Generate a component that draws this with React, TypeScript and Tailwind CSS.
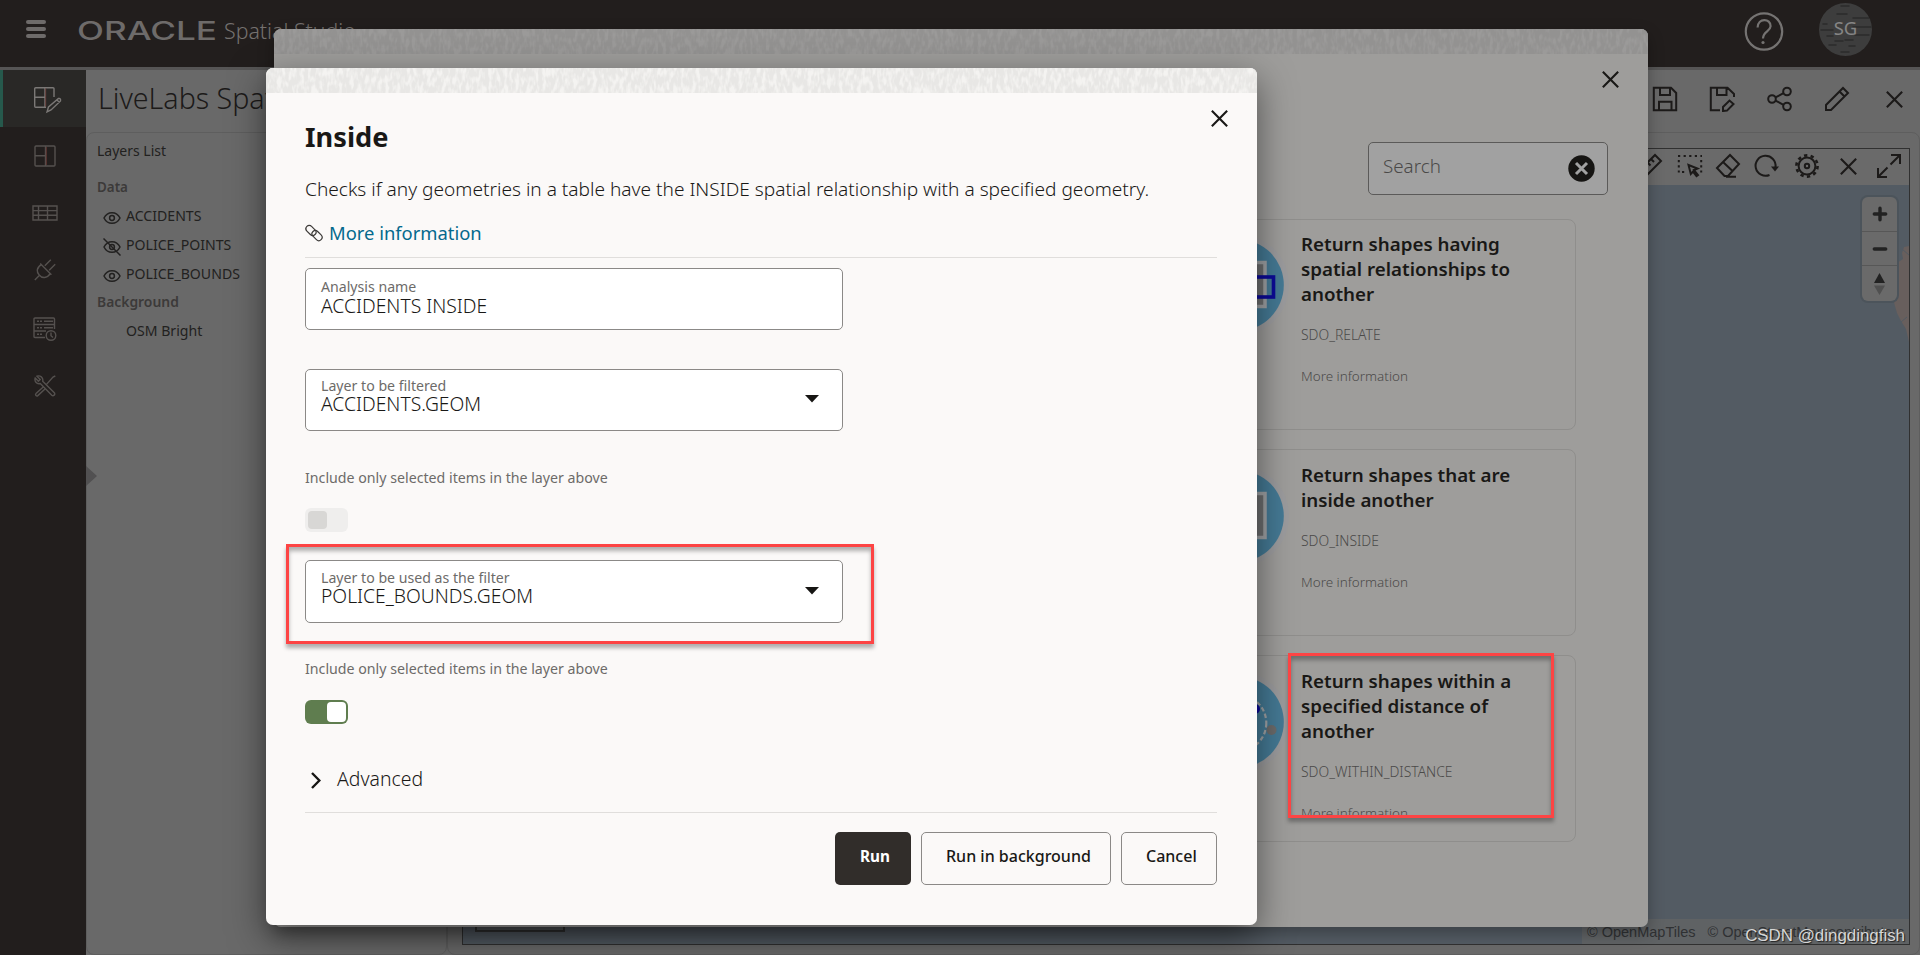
import React from "react";
import type { ReactNode } from "react";

type IconProps = { children: ReactNode; size?: string; box?: string; stroke?: number };

function Icon({ children, size = "size-6", box = "0 0 24 24", stroke = 2 }: IconProps) {
  return (
    <svg viewBox={box} className={`${size} shrink-0`} fill="none" stroke="currentColor" strokeWidth={stroke}>
      {children}
    </svg>
  );
}

function Cross({ size = "size-4" }: { size?: string }) {
  return (
    <Icon size={size} box="0 0 16 16" stroke={2}>
      <path d="M0.8 0.8 L15.2 15.2 M15.2 0.8 L0.8 15.2" />
    </Icon>
  );
}

function TextureStrip({ id, base, ink, seed }: { id: string; base: string; ink: string; seed: number }) {
  return (
    <svg className="block h-[25px] w-full shrink-0" aria-hidden="true">
      <filter id={id} x="0" y="0" width="100%" height="100%" colorInterpolationFilters="sRGB">
        <feTurbulence type="fractalNoise" baseFrequency="0.26 0.11" numOctaves="2" seed={seed} />
        <feColorMatrix values="0 0 0 0 0  0 0 0 0 0  0 0 0 0 0  4 0 0 0 -1.3" result="mask" />
        <feFlood floodColor={ink} />
        <feComposite in2="mask" operator="in" />
      </filter>
      <rect width="100%" height="100%" fill={base} />
      <rect width="100%" height="100%" filter={`url(#${id})`} />
    </svg>
  );
}

function Eye({ off = false }: { off?: boolean }) {
  return (
    <Icon size="w-[18px] h-[18px]" box="0 0 18 18" stroke={1.5}>
      <path d="M1 9 C4.5 1.9 13.5 1.9 17 9 C13.5 16.1 4.5 16.1 1 9 Z" />
      <circle cx="9" cy="9" r="2.4" />
      {off && <path d="M0.5 0.5 L17.5 17.5" />}
    </Icon>
  );
}

function LayerRow({ name, icon }: { name: string; icon?: ReactNode }) {
  return (
    <div className="flex h-[29px] items-center text-[14.1px] text-[#222120]">
      <span className="mr-[5px] flex w-[24px] justify-end pt-1">{icon}</span>
      <span className="whitespace-nowrap">{name}</span>
    </div>
  );
}

function Sidebar() {
  const item = "flex h-[57.4px] items-center justify-center pl-[3px]";
  return (
    <nav className="flex w-[86px] shrink-0 flex-col bg-[#221e1d] text-[#55514f]">
      <div className="flex h-[57px] items-center justify-center border-l-[3px] border-[#26594c] bg-[#292826] pt-[3px] pl-[6px] text-[#7b7876]">
        <Icon size="w-[30px] h-[28px]" box="0 0 30 28" stroke={1.4}>
          <path d="M21 11 V2.7 Q21 1.7 20 1.7 H2.7 Q1.7 1.7 1.7 2.7 V20.3 Q1.7 21.3 2.7 21.3 H13 M12 1.7 V21.3 M1.7 11.3 H12" />
          <path d="M14 26 L15.5 21 L25.5 12.5 Q28 12 27.5 15 L18 24 Z M24 14 L26.5 16.5" />
          <path d="M12.7 2.4 V20.6" stroke="#6b3a35" strokeWidth="0.8" />
        </Icon>
      </div>
      <div className={item}>
        <Icon size="w-[22px] h-[22px]" box="0 0 22 22" stroke={1.4}>
          <rect x="1" y="1" width="20" height="20" rx="1" />
          <path d="M11.5 1 V21 M1 10.7 H11.5" />
          <path d="M12.3 2 V20" stroke="#6b3a35" strokeWidth="0.8" />
        </Icon>
      </div>
      <div className={item}>
        <Icon size="w-[26px] h-[16px]" box="0 0 26 16" stroke={1.4}>
          <path d="M1 1 H25 V15 H1 Z M1 5.6 H25 M1 10.3 H25 M6.5 1 V15 M15.5 1 V15" />
        </Icon>
      </div>
      <div className={item}>
        <Icon size="w-[22px] h-[22px]" box="0 0 22 22" stroke={1.4}>
          <path d="M0.8 21 L6 15.8 M6.2 4.6 L17.4 15.8 M7.3 5.7 C2 9 2.6 13 5.2 16 C8 19.5 13 19.5 16.3 14.7 M10.8 6.8 L16.8 0.8 M15.2 11.2 L21.2 5.2" />
        </Icon>
      </div>
      <div className={`pt-[2px] ${item}`}>
        <Icon size="w-[24px] h-[24px]" box="0 0 24 24" stroke={1.4}>
          <path d="M12 20.5 H2 Q1 20.5 1 19.5 V2 Q1 1 2 1 H20.5 Q21.5 1 21.5 2 V12 M1 7.5 H21.5 M1 14 H13 M4 4.2 H6 M7 4.2 H9 M11 4.2 H20 M4 10.7 H6 M7 10.7 H9 M11 10.7 H20 M4 17.2 H6 M7 17.2 H9" />
          <circle cx="18" cy="18.5" r="4.8" />
          <path d="M18 15.5 V18.7 L20 20.5" />
        </Icon>
      </div>
      <div className={`pt-[2px] ${item}`}>
        <Icon size="w-[22px] h-[22px]" box="0 0 22 22" stroke={1.4}>
          <path d="M3 1.2 L6.2 4.4 L4.4 6.2 L1.2 3 C0.2 6 2.5 9.5 6.3 8.5 L17.8 20.2 C19.3 21.6 21.8 19.4 20.3 17.8 L8.7 6.3 C9.6 2.5 6 0 3 1.2 Z" />
          <path d="M21.3 1 L19 2 L12.3 9.6 M9.5 11.8 L2 18.6 C0.8 20 2.6 21.6 3.8 20.6 L11.3 13.8" />
        </Icon>
      </div>
    </nav>
  );
}

function Header() {
  return (
    <header className="flex h-[67px] shrink-0 items-start bg-[#221e1d]">
      <div className="mt-5 ml-[26px] flex w-5 flex-col gap-[3px]">
        <span className="h-[4px] rounded-sm bg-[#6e6b6a]" />
        <span className="h-[4px] rounded-sm bg-[#6e6b6a]" />
        <span className="h-[4px] rounded-sm bg-[#6e6b6a]" />
      </div>
      <svg className="mt-[15px] ml-[31px] h-[30px] w-[140px] shrink-0" viewBox="0 0 140 30">
        <text x="0" y="24.6" textLength="140" lengthAdjust="spacingAndGlyphs" fill="#6e6b6a" className="font-['Inter'] text-[25px] font-medium">
          ORACLE
        </text>
      </svg>
      <span className="mt-[15px] ml-[7px] text-[21.3px] leading-8 font-light whitespace-nowrap text-[#75716f]">Spatial Studio</span>
      <div className="grow" />
      <svg className="mt-[12px] h-[40px] w-[40px]" viewBox="0 0 40 40" fill="none" stroke="#757372" strokeWidth="2.2">
        <circle cx="20" cy="19.5" r="18.2" />
        <path d="M13.6 15.5 C13.6 5.5 27 6 26.6 14.3 C26.3 19.6 19 19.5 19 26.5" />
        <circle cx="19" cy="30.5" r="1.6" fill="#757372" stroke="none" />
      </svg>
      <div className="mt-[3px] mr-[48px] ml-[35px] grid size-[53px] place-items-center overflow-hidden rounded-full bg-[#3d3d3d]">
        <svg className="col-start-1 row-start-1 size-[53px]" viewBox="0 0 53 53" stroke="#2b2b2b" strokeWidth="1.5" strokeLinecap="round">
          <path d="M22 3 H30 M18 11 H28 M34 15 H50 M4 21 H8 M34 24 H52 M2 27 H14 M8 33 H14 M36 32 H50 M16 38 H24 M26 37 H34 M10 42 H17 M30 43 H36 M22 49 H30" />
        </svg>
        <span className="col-start-1 row-start-1 pb-1 text-[18.5px] leading-6 text-[#858585]">SG</span>
      </div>
    </header>
  );
}

function StudioToolbar() {
  return (
    <div className="flex h-[62px] items-center text-[#1c1a19]">
      <h1 className="ml-[12px] pb-[6px] text-[28.6px] font-[350] whitespace-nowrap">LiveLabs Spatial</h1>
      <div className="grow" />
      <div className="flex items-center pr-[17px] pb-[4px]">
        <Icon size="w-[26px] h-[26px]" box="0 0 26 26">
          <path d="M1.8 1.8 H19 L24.2 7 V24.2 H1.8 Z M8 1.8 V9 H18 V1.8 M7 24 V15.8 H19.5 V24" />
        </Icon>
        <span className="w-[31px]" />
        <Icon size="w-[26px] h-[26px]" box="0 0 26 26">
          <path d="M11 24.2 H1.8 V1.8 H18.5 L25 8 V11 M8 1.8 V9 H17.5 V1.8 M14 25 V21 L20.5 14.5 L24.5 18 L18 24.6 Z" />
        </Icon>
        <span className="w-[32px]" />
        <Icon size="w-[26px] h-[26px]" box="0 0 26 26">
          <circle cx="5" cy="13" r="3.8" />
          <circle cx="20" cy="5.5" r="3.8" />
          <circle cx="20" cy="20.5" r="3.8" />
          <path d="M8.5 11.4 L16.5 7.2 M8.5 14.6 L16.5 18.8" />
        </Icon>
        <span className="w-[31px]" />
        <Icon size="w-[26px] h-[26px]" box="0 0 26 26">
          <path d="M2 24 V19 L19 2 L24 7 L7 24 Z M15.5 5.5 L20.5 10.5" />
        </Icon>
        <span className="w-[36px]" />
        <Cross size="size-[17px]" />
      </div>
    </div>
  );
}

function MapPanel() {
  return (
    <section className="flex grow rounded-tr-lg rounded-b-lg border border-[#5e5e5e] pt-[15px] pr-[9px] pb-[9px] pl-[14px]">
      <div className="relative flex grow flex-col border border-[#303030] bg-[#535b63]">
        <div className="flex h-[36px] shrink-0 items-center justify-end bg-[#6a6a6a] pr-[7px] pb-[2px] text-[#1c1a19]">
          <Icon size="w-[26px] h-[26px]" box="0 0 26 26">
            <path d="M2 18 L18 2 L24 8 L8 24 Z M14 6 L17 9 M10.5 9.5 L13.5 12.5 M7 13 L10 16" />
          </Icon>
          <span className="w-[14px]" />
          <Icon size="w-[26px] h-[26px]" box="0 0 26 26">
            <path d="M1 3 H25" strokeDasharray="2.2 3.4" />
            <path d="M1.8 7 V20 M24.2 7 V20 M5 19 H10" strokeDasharray="2.2 3" />
            <path d="M11.5 12 L20.5 15.5 L17 17 L21 22 L19.5 23.2 L16 18.6 L13.8 21 Z" />
          </Icon>
          <span className="w-[12px]" />
          <Icon size="w-[26px] h-[26px]" box="0 0 26 26">
            <path d="M2 15 L15 2 L24 11 L13 23 H9.5 Z M8 9 L17.5 18 M11 23.8 H21" />
          </Icon>
          <span className="w-[12px]" />
          <Icon size="w-[26px] h-[26px]" box="0 0 26 26">
            <path d="M16.5 22 A10 10 0 1 1 22.5 14" />
            <path d="M18 13.5 H26 L22 18.5 Z" fill="currentColor" stroke="none" />
          </Icon>
          <span className="w-[15px]" />
          <Icon size="w-[26px] h-[26px]" box="0 0 26 26">
            <circle cx="13" cy="13" r="8.4" />
            <circle cx="13" cy="13" r="2.2" />
            <circle cx="13" cy="13" r="10.6" strokeWidth="2.6" strokeDasharray="3.33 3.33" />
          </Icon>
          <span className="w-[20px]" />
          <Cross size="size-[17px]" />
          <span className="w-[19px]" />
          <Icon size="w-[26px] h-[26px]" box="0 0 26 26">
            <path d="M15 2 H24 V11 M24 2 L14.5 11.5 M2 15 V24 H11 M2 24 L11.5 14.5" />
          </Icon>
        </div>
        <div className="flex grow justify-end overflow-hidden">
          <svg className="absolute top-[96px] right-0 h-[100px] w-[17px]" viewBox="0 0 17 100">
            <path d="M17 1 L12 2 L10 8 L11 14 L5 18 L3 30 L1 54 L5 68 L9 76 L14 84 L17 97 Z" fill="#685f5d" />
            <path d="M10 4 L17 10 M15 72 L9 77" stroke="#535b63" fill="none" />
          </svg>
          <div className="relative mt-[12px] mr-[12px] flex h-[104px] w-[35px] flex-col rounded-md bg-[#6a6a6a] text-[#222] shadow-[0_0_0_2px_#4c545b]">
            <span className="flex h-[35px] items-center justify-center border-b border-[#575757]">
              <Icon size="size-4" box="0 0 16 16" stroke={3.4}><path d="M2.3 8 H13.7 M8 2.3 V13.7" strokeLinecap="round" /></Icon>
            </span>
            <span className="flex h-[34px] items-center justify-center border-b border-[#575757]">
              <Icon size="size-4" box="0 0 16 16" stroke={3.4}><path d="M2.3 8 H13.7" strokeLinecap="round" /></Icon>
            </span>
            <span className="flex h-[35px] items-center justify-center">
              <svg className="h-[22px] w-[11px]" viewBox="0 0 11 22">
                <path d="M5.5 0 L11 10 H0 Z" fill="#222" />
                <path d="M5.5 22 L11 12.5 H0 Z" fill="#505050" />
              </svg>
            </span>
          </div>
        </div>
        <div className="flex h-[25px] items-end justify-between">
          <div className="mb-3 ml-3 h-5 w-[90px] border-2 border-[#333] bg-[#555a5d]" />
          <div className="flex h-[25px] w-[327px] items-center gap-3 bg-[#5f6264] pt-[2px] pl-[5px] font-['Liberation_Sans'] text-[14.5px] whitespace-nowrap text-[#2f3133]">
            <span>© OpenMapTiles</span>
            <span>© OpenStreetMap contributors</span>
          </div>
        </div>
      </div>
    </section>
  );
}

function Studio() {
  return (
    <div className="flex h-[955px] w-[1920px] flex-col overflow-hidden bg-[#696969]">
      <Header />
      <div className="h-[3px] shrink-0 bg-[#565555]" />
      <div className="flex grow">
        <Sidebar />
        <main className="flex grow flex-col">
          <StudioToolbar />
          <div className="flex grow">
            <aside className="flex w-[361px] shrink-0 flex-col rounded-lg border border-[#5e5e5e] pt-[6px] pl-[10px]">
              <div className="flex h-[23px] items-center text-[14px] text-[#222120]">Layers List</div>
              <div className="mt-[12px] flex h-[26px] items-center text-[13.4px] font-semibold text-[#3c3a39]">Data</div>
              <div className="mt-px flex flex-col">
                <LayerRow name="ACCIDENTS" icon={<Eye />} />
                <LayerRow name="POLICE_POINTS" icon={<Eye off />} />
                <LayerRow name="POLICE_BOUNDS" icon={<Eye />} />
              </div>
              <div className="mt-px flex h-[27px] items-center text-[13.9px] font-semibold text-[#3c3a39]">Background</div>
              <LayerRow name="OSM Bright" />
              <svg className="mt-[121px] -ml-[11px] h-[20px] w-[12px]" viewBox="0 0 12 20">
                <path d="M0 0 L11 10 L0 20 Z" fill="#515051" />
              </svg>
            </aside>
            <MapPanel />
          </div>
        </main>
      </div>
    </div>
  );
}

type Analysis = { title: string[]; op: string; drawing: ReactNode; box: string };

const analyses: Analysis[] = [
  {
    title: ["Return shapes having", "spatial relationships to", "another"],
    op: "SDO_RELATE",
    box: "h-[211px] pt-[11px]",
    drawing: (
      <>
        <rect x="34" y="28.5" width="44" height="44" fill="#6d6f70" stroke="#a0a3a5" strokeWidth="3.5" />
        <rect x="24" y="43" width="62.5" height="20" fill="none" stroke="#0c0a98" strokeWidth="3.6" />
      </>
    ),
  },
  {
    title: ["Return shapes that are", "inside another"],
    op: "SDO_INSIDE",
    box: "h-[187px] pt-3",
    drawing: <rect x="24" y="28.5" width="54" height="44" fill="#6d6f70" stroke="#a0a3a5" strokeWidth="3.5" />,
  },
  {
    title: ["Return shapes within a", "specified distance of", "another"],
    op: "SDO_WITHIN_DISTANCE",
    box: "h-[187px] pt-3",
    drawing: (
      <>
        <circle cx="51" cy="52" r="28.3" fill="none" stroke="#a0a3a5" strokeWidth="2.2" strokeDasharray="4.5 2.5" />
        <circle cx="68" cy="38" r="5" fill="#0c0a98" />
        <circle cx="84.5" cy="59" r="5" fill="#6b6b6b" />
      </>
    ),
  },
];

function AnalysisCard({ item }: { item: Analysis }) {
  return (
    <article className={`flex w-[402px] gap-3 rounded-lg border border-[#8f8e8c] pl-[12px] ${item.box}`}>
      <svg className="mt-[3px] size-[102px] shrink-0" viewBox="0 0 102 102">
        <circle cx="51" cy="51" r="51" fill="#9c9c9e" />
        <circle cx="51" cy="51" r="45.8" fill="#457a95" />
        {item.drawing}
      </svg>
      <div className="flex flex-col whitespace-nowrap">
        <h3 className="flex flex-col text-[18.75px] leading-[25px] font-semibold text-[#191816]">
          {item.title.map((line) => (
            <span key={line}>{line}</span>
          ))}
        </h3>
        <span className="mt-[19px] text-[13.9px] leading-5 font-[350] text-[#4b4a49]">{item.op}</span>
        <span className="mt-[21px] text-[13.45px] leading-5 font-[350] text-[#4b4a49]">More information</span>
      </div>
    </article>
  );
}

function AnalysisListDialog() {
  return (
    <div className="absolute top-[29px] left-[274px] flex h-[898px] w-[1374px] flex-col overflow-hidden rounded-[7px] bg-[#9e9d9b]">
      <TextureStrip id="grain-back" base="#9b9a99" ink="#939291" seed={4} />
      <div className="mt-[17px] flex justify-end pr-[29px] text-[#191816]">
        <Cross size="size-[17px]" />
      </div>
      <div className="mt-[54px] mr-10 flex h-[53px] w-[240px] shrink-0 items-center justify-between self-end rounded-[5px] border border-[#5b5a59] bg-[#a1a1a1] pr-3 pl-[14px]">
        <span className="pb-[5px] text-[18.8px] font-light text-[#4a4948]">Search</span>
        <svg className="size-[27px]" viewBox="0 0 27 27">
          <circle cx="13.5" cy="13.5" r="13.2" fill="#161513" />
          <path d="M8 8 L19 19 M19 8 L8 19" stroke="#a1a1a1" strokeWidth="3" />
        </svg>
      </div>
      <div className="mt-6 mr-[72px] flex flex-col items-end gap-[19px]">
        {analyses.map((item) => (
          <AnalysisCard key={item.op} item={item} />
        ))}
      </div>
    </div>
  );
}

type FieldProps = { label: string; value: string; select?: boolean; box: string; labelClass: string };

function Field({ label, value, select = false, box, labelClass }: FieldProps) {
  return (
    <div className={`flex w-[538px] shrink-0 justify-between rounded-[5px] border border-[#8b8987] bg-white pr-[23px] pl-[15px] ${box}`}>
      <div className="flex flex-col">
        <span className={`text-[14.15px] text-[#6d6b69] ${labelClass}`}>{label}</span>
        <span className="text-[19.3px] leading-[19px] font-[350] text-[#191816]">{value}</span>
      </div>
      {select && (
        <svg className="mt-[17px] h-[8px] w-[14px]" viewBox="0 0 14 8">
          <path d="M0 0 H14 L7 7.5 Z" fill="#161513" />
        </svg>
      )}
    </div>
  );
}

function InsideDialog() {
  const hint = "text-[14.2px] leading-5 text-[#6d6b69]";
  return (
    <div className="absolute top-[68px] left-[266px] flex h-[857px] w-[991px] flex-col overflow-hidden rounded-[7px] bg-[#fbf9f8]">
      <TextureStrip id="grain-front" base="#f4f3f1" ink="#e8e7e5" seed={9} />
      <div className="flex flex-col pr-[40px] pl-[39px] whitespace-nowrap text-[#191816]">
        <div className="flex justify-between">
          <h2 className="mt-[26px] text-[27.2px] leading-9 font-bold">Inside</h2>
          <span className="mt-[17px] -mr-[11px]">
            <Cross size="size-[17px]" />
          </span>
        </div>
        <p className="mt-5 text-[19.1px] leading-7 font-[350]">
          Checks if any geometries in a table have the INSIDE spatial relationship with a specified geometry.
        </p>
        <a className="mt-4 flex items-center gap-[6px] text-[18.4px] leading-7 text-[#04698d]">
          <span className="text-[#3c3a38]">
            <Icon size="w-[18px] h-[18px]" box="0 0 18 18" stroke={1.2}>
              <rect x="0.2" y="3.2" width="11.5" height="6.6" rx="3.3" transform="rotate(45 6 6.5)" />
              <rect x="6.3" y="8.2" width="11.5" height="6.6" rx="3.3" transform="rotate(45 12 11.5)" />
            </Icon>
          </span>
          More information
        </a>
        <hr className="mt-[10px] border-t border-[#e0dedc]" />
        <div className="mt-[10px] flex flex-col">
          <Field label="Analysis name" value="ACCIDENTS INSIDE" box="h-[62px] pt-[9px]" labelClass="leading-[18px]" />
          <Field select label="Layer to be filtered" value="ACCIDENTS.GEOM" box="mt-[39px] h-[62px] pt-2" labelClass="leading-4" />
          <span className={`mt-[37px] ${hint}`}>Include only selected items in the layer above</span>
          <span className="mt-[20px] flex h-6 w-[43px] items-center rounded-[6px] bg-[#efeeed] pl-[3px]">
            <span className="h-[18px] w-[19px] rounded-[4px] bg-[#d8d7d5]" />
          </span>
          <Field select label="Layer to be used as the filter" value="POLICE_BOUNDS.GEOM" box="mt-7 h-[63px] pt-[9px]" labelClass="leading-4" />
          <span className={`mt-[36px] ${hint}`}>Include only selected items in the layer above</span>
          <span className="mt-[21px] flex h-6 w-[43px] items-center justify-end rounded-[6px] bg-[#5f7d4f] pr-[2px]">
            <span className="h-5 w-[19px] rounded-[4px] bg-white" />
          </span>
          <div className="mt-[41px] flex h-7 items-center gap-4 pl-[6px]">
            <svg className="mt-[3px] h-[17px] w-[10px]" viewBox="0 0 10 17" fill="none" stroke="#161513" strokeWidth="2.4">
              <path d="M1 1 L8.4 8.5 L1 16" />
            </svg>
            <span className="text-[19.4px] leading-7 font-[350]">Advanced</span>
          </div>
        </div>
        <hr className="mt-[19px] border-t border-[#e0dedc]" />
        <div className="mt-[19px] flex h-[53px] justify-end gap-[10px] text-[16px] leading-6 font-medium">
          <button className="flex w-[76px] rounded-[5px] bg-[#312d2a] pt-3 pl-[25px] text-[15.3px] font-bold text-white">Run</button>
          <button className="flex w-[190px] rounded-[5px] border border-[#8b8987] pt-[11px] pl-[24px]">Run in background</button>
          <button className="flex w-[96px] rounded-[5px] border border-[#8b8987] pt-[11px] pl-[24px]">Cancel</button>
        </div>
      </div>
    </div>
  );
}

export default function App() {
  return (
    <div className="relative h-[955px] w-[1920px] overflow-hidden font-['Noto_Sans',sans-serif]">
      <Studio />
      <div className="absolute top-[29px] left-[274px] h-[898px] w-[1374px] rounded-[7px] shadow-[0_6px_16px_rgba(0,0,0,0.3)]" />
      <AnalysisListDialog />
      <div className="absolute top-[68px] left-[266px] h-[857px] w-[991px] rounded-[7px] shadow-[0_12px_36px_rgba(0,0,0,0.5)]" />
      <InsideDialog />
      <div className="absolute top-[544px] left-[286px] h-[100px] w-[588px] border-[3px] border-[#fd4444] shadow-[0_4px_4px_rgba(0,0,0,0.3),inset_0_4px_4px_rgba(0,0,0,0.3)]" />
      <div className="absolute top-[653px] left-[1288px] h-[165px] w-[266px] border-[3px] border-[#fd4444] shadow-[0_4px_4px_rgba(0,0,0,0.3),inset_0_4px_4px_rgba(0,0,0,0.3)]" />
      <span className="absolute right-[15px] bottom-[7px] font-['Liberation_Sans'] text-[16.9px] leading-6 whitespace-nowrap text-[#d6d6d6] [text-shadow:1px_1px_1px_#222]">
        CSDN @dingdingfish
      </span>
    </div>
  );
}
